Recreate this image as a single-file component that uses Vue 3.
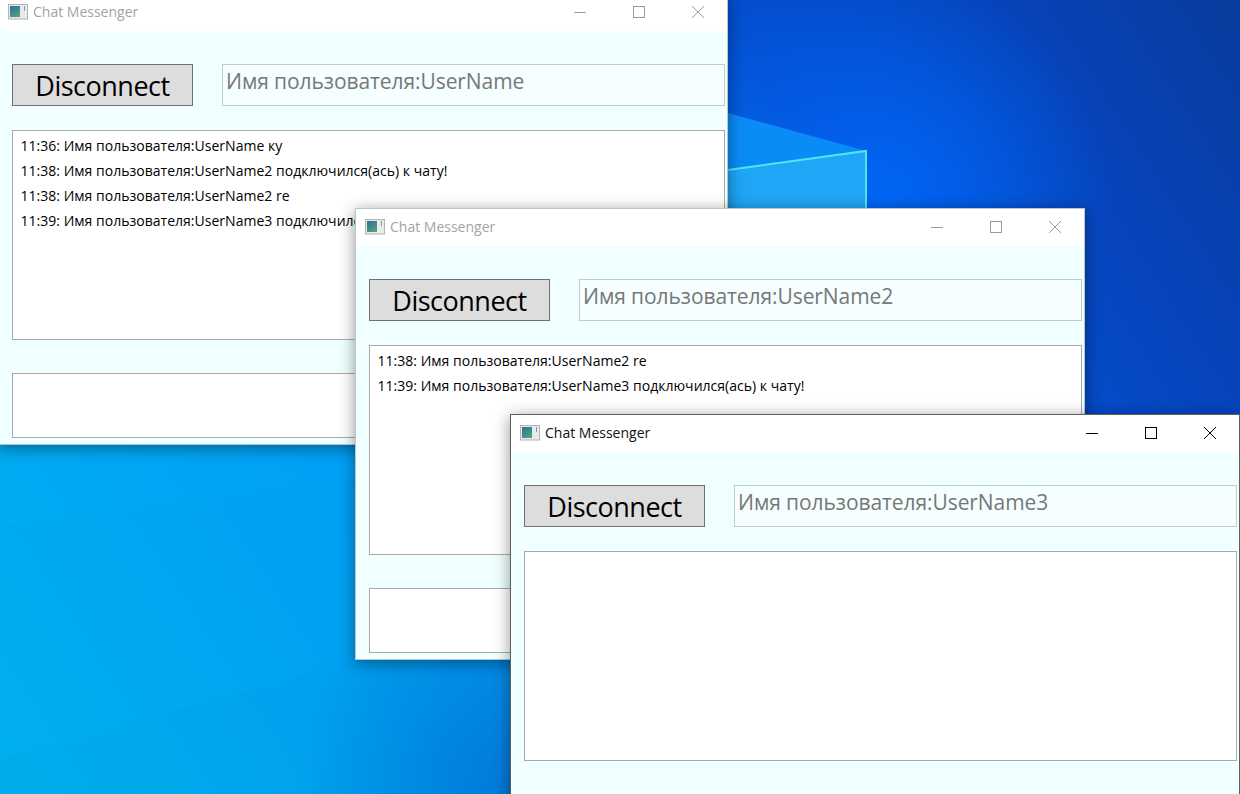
<script setup>
const windows = [
  {
    id: 'first',
    user: 'UserName',
    active: false,
    messages: [
      '11:36: Имя пользователя:UserName ку',
      '11:38: Имя пользователя:UserName2 подключился(ась) к чату!',
      '11:38: Имя пользователя:UserName2 re',
      '11:39: Имя пользователя:UserName3 подключился(ась) к чату!',
    ],
  },
  {
    id: 'second',
    user: 'UserName2',
    active: false,
    messages: [
      '11:38: Имя пользователя:UserName2 re',
      '11:39: Имя пользователя:UserName3 подключился(ась) к чату!',
    ],
  },
  {id: 'third', user: 'UserName3', active: true, messages: []},
];
</script>

<template>
  <div class="desktop">
    <svg class="wallpaper" width="1240" height="794" viewBox="0 0 1240 794">
      <defs>
        <linearGradient id="base" x1="0" y1="794" x2="1240" y2="0" gradientUnits="userSpaceOnUse">
          <stop offset="0" stop-color="#00b2f0" />
          <stop offset="0.32" stop-color="#00a0f6" />
          <stop offset="0.5" stop-color="#0088ee" />
          <stop offset="0.7" stop-color="#0450d2" />
          <stop offset="0.85" stop-color="#0644bc" />
          <stop offset="1" stop-color="#083c9c" />
        </linearGradient>
        <radialGradient id="glow" cx="880" cy="200" r="230" gradientUnits="userSpaceOnUse">
          <stop offset="0" stop-color="#0066f6" />
          <stop offset="1" stop-color="#0066f6" stop-opacity="0" />
        </radialGradient>
        <radialGradient id="corner" cx="530" cy="794" r="240" gradientUnits="userSpaceOnUse">
          <stop offset="0" stop-color="#0076d6" />
          <stop offset="1" stop-color="#0076d6" stop-opacity="0" />
        </radialGradient>
      </defs>
      <rect width="1240" height="794" fill="url(#base)" />
      <rect width="1240" height="794" fill="url(#glow)" />
      <polygon points="0,526 510,457 510,794 0,794" fill="#0080c0" fill-opacity="0.05" />
      <polygon points="0,760 510,616 510,794 0,794" fill="#0080c0" fill-opacity="0.05" />
      <rect width="1240" height="794" fill="url(#corner)" />
      <polygon points="728,113 866,151 728,170" fill="#0a8cf6" />
      <polygon points="728,170 866,151 866,260 728,260" fill="#1fa6f6" />
      <polyline points="728,170 866,151 866,260" fill="none" stroke="#4fe6f4" stroke-width="2" />
    </svg>

    <section v-for="win in windows" :key="win.id" class="window" :class="[win.id, {active: win.active}]">
      <header class="titlebar">
        <svg class="app-icon" width="20" height="16" viewBox="0 0 20 16">
          <defs>
            <linearGradient :id="`icon-${win.id}`" x1="0" y1="0" x2="0.6" y2="1">
              <stop offset="0" stop-color="#2f6f9c" />
              <stop offset="1" stop-color="#4fa07e" />
            </linearGradient>
          </defs>
          <rect x="0.5" y="0.5" width="19" height="14.5" fill="#eaeaea" stroke="#b4b4b4" />
          <rect x="2" y="2" width="10" height="11" :fill="`url(#icon-${win.id})`" />
          <rect x="16" y="2" width="1" height="5" fill="#6fa59f" />
        </svg>
        <span class="title">Chat Messenger</span>
        <div class="controls">
          <svg width="14" height="14" viewBox="0 0 14 14"><path d="M1 7.5h12" /></svg>
          <svg width="14" height="14" viewBox="0 0 14 14"><rect x="1.5" y="1.5" width="11" height="11" /></svg>
          <svg width="14" height="14" viewBox="0 0 14 14"><path d="M1 1l12 12M13 1L1 13" /></svg>
        </div>
      </header>
      <div class="content">
        <div class="top-row">
          <button class="connect">Disconnect</button>
          <div class="name-field">Имя пользователя:{{ win.user }}</div>
        </div>
        <div class="log">
          <div v-for="(line, index) in win.messages" :key="index" class="line">{{ line }}</div>
        </div>
        <div class="entry"></div>
      </div>
    </section>
  </div>
</template>

<style scoped>
.desktop {
  position: relative;
  width: 1240px;
  height: 794px;
  overflow: hidden;
  font-family: "Open Sans", "Noto Sans", sans-serif;
}

.wallpaper {
  position: absolute;
  left: 0;
  top: 0;
}

.window {
  position: absolute;
  box-sizing: border-box;
  width: 730px;
  height: 452px;
  display: flex;
  flex-direction: column;
  background: #f0ffff;
  border: 1px solid rgba(0, 0, 0, 0.22);
  box-shadow: 0 3px 15px rgba(0, 0, 0, 0.42);
}

.first {
  left: -2px;
  top: -7px;
}

.second {
  left: 355px;
  top: 208px;
}

.third {
  left: 510px;
  top: 414px;
  border: 1px solid #5f5f5f;
}

.titlebar {
  box-sizing: border-box;
  height: 37px;
  flex: none;
  display: flex;
  align-items: center;
  background: #fff;
  padding: 0 0 2px 9px;
}

.app-icon {
  flex: none;
}

.title {
  margin-left: 5px;
  font-size: 14px;
  color: #a3a3a3;
}

.active .title {
  color: #111;
}

.controls {
  margin-left: auto;
  display: flex;
  gap: 45px;
  padding-right: 22px;
}

.controls svg {
  fill: none;
  stroke: #9a9a9a;
  stroke-width: 1;
}

.active .controls svg {
  stroke: #000;
}

.content {
  flex: 1;
  display: flex;
  flex-direction: column;
  padding: 33px 2px 5px 13px;
}

.top-row {
  display: flex;
  gap: 29px;
  height: 42px;
}

.connect {
  box-sizing: border-box;
  width: 181px;
  height: 42px;
  padding: 0;
  background: #dddddd;
  border: 1px solid #707070;
  border-radius: 0;
  color: #000;
  font-family: inherit;
  font-size: 27px;
  letter-spacing: -0.5px;
}

.name-field {
  box-sizing: border-box;
  flex: 1;
  height: 42px;
  padding: 0 3px;
  background: #f5ffff;
  border: 1px solid #c2caca;
  color: #777;
  font-size: 21px;
  line-height: 33px;
  letter-spacing: -0.08px;
  white-space: nowrap;
}

.log {
  box-sizing: border-box;
  height: 210px;
  margin-top: 24px;
  padding: 2px 7.5px;
  background: #fff;
  border: 1px solid #a9a9a9;
}

.line {
  height: 25px;
  font-size: 14px;
  line-height: 25px;
  letter-spacing: 0.02px;
  color: #000;
  white-space: nowrap;
}

.entry {
  box-sizing: border-box;
  height: 65px;
  margin-top: 33px;
  background: #fff;
  border: 1px solid #a9a9a9;
}
</style>

<style>
html,
body {
  margin: 0;
  overflow: hidden;
}
</style>
